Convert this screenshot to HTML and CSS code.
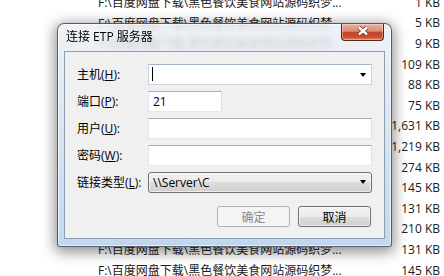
FILE: index.html
```html
<!DOCTYPE html>
<html>
  <head>
    <meta charset="utf-8">
    <link rel="stylesheet" href="styles.css">
  </head>
  <body>
    <div class="filelist">
      <div class="row"><span class="name">F:\百度网盘下载\黑色餐饮美食网站源码织梦...</span><span class="size">1 KB</span></div>
      <div class="row"><span class="name">F:\百度网盘下载\黑色餐饮美食网站源码织梦...</span><span class="size">5 KB</span></div>
      <div class="row"><span class="name">F:\百度网盘下载\黑色餐饮美食网站源码织梦...</span><span class="size">9 KB</span></div>
      <div class="row"><span class="name">F:\百度网盘下载\黑色餐饮美食网站源码织梦...</span><span class="size">109 KB</span></div>
      <div class="row"><span class="name">F:\百度网盘下载\黑色餐饮美食网站源码织梦...</span><span class="size">88 KB</span></div>
      <div class="row"><span class="name">F:\百度网盘下载\黑色餐饮美食网站源码织梦...</span><span class="size">75 KB</span></div>
      <div class="row"><span class="name">F:\百度网盘下载\黑色餐饮美食网站源码织梦...</span><span class="size">1,631 KB</span></div>
      <div class="row"><span class="name">F:\百度网盘下载\黑色餐饮美食网站源码织梦...</span><span class="size">1,219 KB</span></div>
      <div class="row"><span class="name">F:\百度网盘下载\黑色餐饮美食网站源码织梦...</span><span class="size">274 KB</span></div>
      <div class="row"><span class="name">F:\百度网盘下载\黑色餐饮美食网站源码织梦...</span><span class="size">145 KB</span></div>
      <div class="row"><span class="name">F:\百度网盘下载\黑色餐饮美食网站源码织梦...</span><span class="size">131 KB</span></div>
      <div class="row"><span class="name">F:\百度网盘下载\黑色餐饮美食网站源码织梦...</span><span class="size">210 KB</span></div>
      <div class="row"><span class="name">F:\百度网盘下载\黑色餐饮美食网站源码织梦...</span><span class="size">131 KB</span></div>
      <div class="row"><span class="name">F:\百度网盘下载\黑色餐饮美食网站源码织梦...</span><span class="size">145 KB</span></div>
    </div>

    <div class="dialog">
      <div class="titlebar">
        <span class="title">连接 ETP 服务器</span>
        <span class="close">
          <svg width="12" height="10" viewBox="0 0 12 10">
            <path d="M2 1.5 L10 8.5 M10 1.5 L2 8.5" stroke="#5b1e12" stroke-opacity="0.75" stroke-width="4.2" fill="none"/>
            <path d="M2 1.5 L10 8.5 M10 1.5 L2 8.5" stroke="#ffffff" stroke-width="2.4" fill="none"/>
          </svg>
        </span>
      </div>
      <div class="client">
        <div class="form">
          <label>主机(<u>H</u>):</label>
          <div class="field combo"><span class="caret"></span><span class="arrow"></span></div>

          <label>端口(<u>P</u>):</label>
          <div class="field port">21</div>

          <label>用户(<u>U</u>):</label>
          <div class="field"></div>

          <label>密码(<u>W</u>):</label>
          <div class="field"></div>

          <label>链接类型(<u>L</u>):</label>
          <div class="select">\\Server\C<span class="arrow"></span></div>
        </div>
        <div class="buttons">
          <button class="btn" disabled>确定</button>
          <button class="btn">取消</button>
        </div>
      </div>
    </div>
  </body>
</html>
```

FILE: styles.css
```css
body {
  margin: 0;
  background: #ffffff;
  font-family: "Open Sans", "Noto Sans CJK SC", sans-serif;
  font-size: 12px;
  overflow: hidden;
}

/* explorer list behind the dialog */
.filelist {
  margin-top: -8px;
  color: #202020;
}
.row {
  display: flex;
  align-items: center;
  height: 20.6px;
  padding: 0 4px 0 98px;
}
.row .name {
  flex: 1;
  white-space: nowrap;
  overflow: hidden;
}
.row .size {
  width: 70px;
  text-align: right;
}

/* aero dialog */
.dialog {
  position: absolute;
  left: 57px;
  top: 23px;
  width: 335px;
  height: 224px;
  box-sizing: border-box;
  padding: 0 6px 7px 6px;
  border: 1px solid rgba(40, 50, 60, 0.75);
  border-radius: 7px 7px 3px 3px;
  background: linear-gradient(rgba(236, 240, 245, 0.82), rgba(214, 228, 242, 0.88) 40%, rgba(190, 213, 238, 0.92));
  backdrop-filter: blur(3px);
  box-shadow: inset 0 0 0 1px rgba(255, 255, 255, 0.6), 0 3px 14px 2px rgba(0, 0, 0, 0.45);
  display: flex;
  flex-direction: column;
}
.titlebar {
  height: 27px;
  display: flex;
  align-items: flex-start;
}
.title {
  padding: 5px 0 0 2px;
  line-height: 16px;
  font-size: 12px;
  color: #000;
}
.close {
  margin-left: auto;
  margin-right: 1px;
  width: 43px;
  height: 17px;
  box-sizing: border-box;
  border: 1px solid #5a2418;
  border-top: none;
  border-radius: 0 0 4px 4px;
  background: linear-gradient(#eab0a0 0%, #dc8a74 45%, #c5452c 52%, #c44a31 78%, #dc7e5c 100%);
  box-shadow: inset 0 0 0 1px rgba(255, 255, 255, 0.35);
  display: flex;
  align-items: center;
  justify-content: center;
}
.close svg {
  margin-top: -2px;
}

.client {
  flex: 1;
  background: #f0f0f0;
  border: 1px solid #8d9eb1;
  padding: 12px 12px 0 12px;
  color: #000;
}
.form {
  display: grid;
  grid-template-columns: 71px 1fr;
  grid-auto-rows: 21px;
  row-gap: 6px;
  align-items: center;
}
.form label {
  line-height: 16px;
  white-space: nowrap;
}
.field {
  height: 21px;
  box-sizing: border-box;
  background: #fff;
  border: 1px solid;
  border-color: #abadb3 #dbdfe6 #e3e9ef #e2e3ea;
  padding-left: 4px;
  line-height: 19px;
  position: relative;
}
.field.combo {
  border-color: #a5b6c8 #c5d3e2 #c9d6e4 #c5d3e2;
}
.field.port {
  width: 74px;
}
.caret {
  position: absolute;
  left: 3px;
  top: 2px;
  width: 1px;
  height: 14px;
  background: #000;
}
.arrow {
  position: absolute;
  right: 5px;
  top: 8px;
  width: 0;
  height: 0;
  border-left: 3.5px solid transparent;
  border-right: 3.5px solid transparent;
  border-top: 4px solid #000;
}
.select {
  position: relative;
  height: 21px;
  box-sizing: border-box;
  border: 1px solid #707070;
  border-radius: 3px;
  background: linear-gradient(#f2f2f2, #ebebeb 50%, #dddddd 50%, #cfcfcf);
  box-shadow: inset 0 0 0 1px rgba(255, 255, 255, 0.6);
  padding-left: 4px;
  line-height: 19px;
}
.select .arrow {
  right: 5px;
  top: 7px;
}

.buttons {
  display: flex;
  justify-content: flex-end;
  gap: 8px;
  margin-top: 13px;
  padding-right: 1px;
}
.btn {
  width: 73px;
  height: 21px;
  padding: 0;
  font: inherit;
  color: #000;
  border: 1px solid #707070;
  border-radius: 3px;
  background: linear-gradient(#f2f2f2, #ebebeb 50%, #dddddd 50%, #cfcfcf);
  box-shadow: inset 0 0 0 1px rgba(255, 255, 255, 0.6);
}
.btn:disabled {
  color: #8a8a8a;
  border-color: #adb2b5;
  background: #f4f4f4;
  box-shadow: none;
}
```
